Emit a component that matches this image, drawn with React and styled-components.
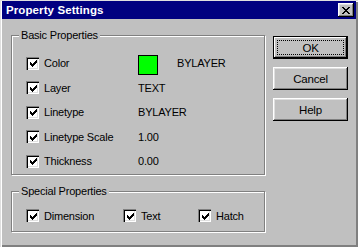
import React from "react";
import styled, { createGlobalStyle } from "styled-components";

const basicRows = [
  { label: "Color", swatch: "#00ff00", value: "BYLAYER" },
  { label: "Layer", value: "TEXT" },
  { label: "Linetype", value: "BYLAYER" },
  { label: "Linetype Scale", value: "1.00" },
  { label: "Thickness", value: "0.00" },
];

const specialItems = [
  { label: "Dimension", width: 97 },
  { label: "Text", width: 75 },
  { label: "Hatch" },
];

const CheckBox = () => (
  <Box>
    <svg width="7" height="7" viewBox="0 0 7 7" shapeRendering="crispEdges">
      <path
        fill="#000"
        d="M6 0h1v1h-1z M5 1h2v1h-2z M0 2h1v1h-1z M4 2h3v1h-3z M0 3h2v1h-2z M3 3h3v1h-3z M0 4h5v1h-5z M1 5h3v1h-3z M2 6h1v1h-1z"
      />
    </svg>
  </Box>
);

const App = () => {
  return (
    <>
      <GlobalStyle />
      <Frame>
        <TitleBar>
          <Title>Property Settings</Title>
          <CloseButton>
            <svg width="8" height="7" viewBox="0 0 8 7" shapeRendering="crispEdges">
              <path
                fill="#000"
                d="M0 0h2v1h-2z M6 0h2v1h-2z M1 1h2v1h-2z M5 1h2v1h-2z M2 2h4v1h-4z M3 3h2v1h-2z M2 4h4v1h-4z M1 5h2v1h-2z M5 5h2v1h-2z M0 6h2v1h-2z M6 6h2v1h-2z"
              />
            </svg>
          </CloseButton>
        </TitleBar>
        <Body>
          <Groups>
            <Group $height={140}>
              <Legend>Basic Properties</Legend>
              <BasicList>
                {basicRows.map((row) => (
                  <Row key={row.label}>
                    <Check>
                      <CheckBox />
                      <span>{row.label}</span>
                    </Check>
                    <Value>
                      {row.swatch && <Swatch $color={row.swatch} />}
                      <span>{row.value}</span>
                    </Value>
                  </Row>
                ))}
              </BasicList>
            </Group>
            <Group $height={41}>
              <Legend>Special Properties</Legend>
              <SpecialRow>
                {specialItems.map((item) => (
                  <Check key={item.label} $width={item.width}>
                    <CheckBox />
                    <span>{item.label}</span>
                  </Check>
                ))}
              </SpecialRow>
            </Group>
          </Groups>
          <Buttons>
            <Button $default>OK</Button>
            <Button>Cancel</Button>
            <Button>Help</Button>
          </Buttons>
        </Body>
      </Frame>
    </>
  );
};

export default App;

const GlobalStyle = createGlobalStyle`
  body {
    margin: 0;
    background: #c0c0c0;
  }
`;

const Frame = styled.div`
  width: 358px;
  height: 247px;
  box-sizing: border-box;
  padding: 1px 2px 2px 2px;
  background: #c0c0c0;
  box-shadow: inset 1px 1px 0 #dfdfdf, inset 2px 2px 0 #fff,
    inset -1px -1px 0 #808080, inset -2px -2px 0 #808080;
  font-family: "Liberation Sans", Arial, sans-serif;
  font-size: 11px;
  letter-spacing: -0.2px;
  color: #000;
`;

const TitleBar = styled.div`
  height: 18px;
  background: #000080;
  display: flex;
  align-items: center;
  justify-content: space-between;
  padding: 0 2px 0 4px;
`;

const Title = styled.div`
  color: #fff;
  font-weight: bold;
  font-size: 11.5px;
  letter-spacing: 0.1px;
`;

const CloseButton = styled.div`
  width: 16px;
  height: 14px;
  box-sizing: border-box;
  background: #c0c0c0;
  display: flex;
  align-items: center;
  justify-content: center;
  box-shadow: inset -1px -1px 0 #000, inset 1px 1px 0 #fff,
    inset -2px -2px 0 #808080, inset 2px 2px 0 #dfdfdf;
  padding-right: 1px;
`;

const Body = styled.div`
  display: flex;
  padding: 16px 0 0 9px;
`;

const Groups = styled.div`
  display: flex;
  flex-direction: column;
  gap: 16px;
  width: 254px;
`;

const Group = styled.div`
  position: relative;
  height: ${(p) => p.$height}px;
  box-sizing: border-box;
  border: 1px solid #808080;
  box-shadow: 1px 1px 0 #fff, inset 1px 1px 0 #fff;
`;

const Legend = styled.div`
  position: absolute;
  top: -7px;
  left: 7px;
  padding: 0 2px;
  background: #c0c0c0;
  line-height: 13px;
`;

const BasicList = styled.div`
  display: flex;
  flex-direction: column;
  padding: 15px 0 0 14px;
`;

const Row = styled.div`
  display: grid;
  grid-template-columns: 112px auto;
  align-items: center;
  height: 24.5px;
`;

const Check = styled.div`
  display: flex;
  align-items: center;
  gap: 5px;
  width: ${(p) => (p.$width ? `${p.$width}px` : "auto")};
`;

const Box = styled.div`
  width: 13px;
  height: 13px;
  box-sizing: border-box;
  background: #fff;
  display: flex;
  align-items: center;
  justify-content: center;
  box-shadow: inset 1px 1px 0 #808080, inset 2px 2px 0 #000,
    inset -1px -1px 0 #fff, inset -2px -2px 0 #dfdfdf;
  padding: 1px 0 0 1px;
  flex-shrink: 0;
`;

const Value = styled.div`
  display: flex;
  align-items: center;
  gap: 19px;
`;

const Swatch = styled.div`
  width: 20px;
  height: 20px;
  box-sizing: border-box;
  border: 1px solid #000;
  background: ${(p) => p.$color};
  margin-top: 3px;
`;

const SpecialRow = styled.div`
  display: flex;
  align-items: center;
  padding: 17px 0 0 14px;
`;

const Buttons = styled.div`
  display: flex;
  flex-direction: column;
  gap: 8px;
  margin: 1px 0 0 8px;
`;

const Button = styled.div`
  position: relative;
  width: 75px;
  height: 23px;
  box-sizing: border-box;
  display: flex;
  align-items: center;
  justify-content: center;
  background: #c0c0c0;
  font-size: 11.5px;
  box-shadow: ${(p) =>
    p.$default
      ? "inset 0 0 0 1px #000, inset -2px -2px 0 #000, inset 2px 2px 0 #fff, inset -3px -3px 0 #808080"
      : "inset -1px -1px 0 #000, inset 1px 1px 0 #fff, inset -2px -2px 0 #808080, inset 2px 2px 0 #dfdfdf"};

  &::after {
    content: "";
    display: ${(p) => (p.$default ? "block" : "none")};
    position: absolute;
    inset: 4px;
    border: 1px dotted #000;
  }
`;
